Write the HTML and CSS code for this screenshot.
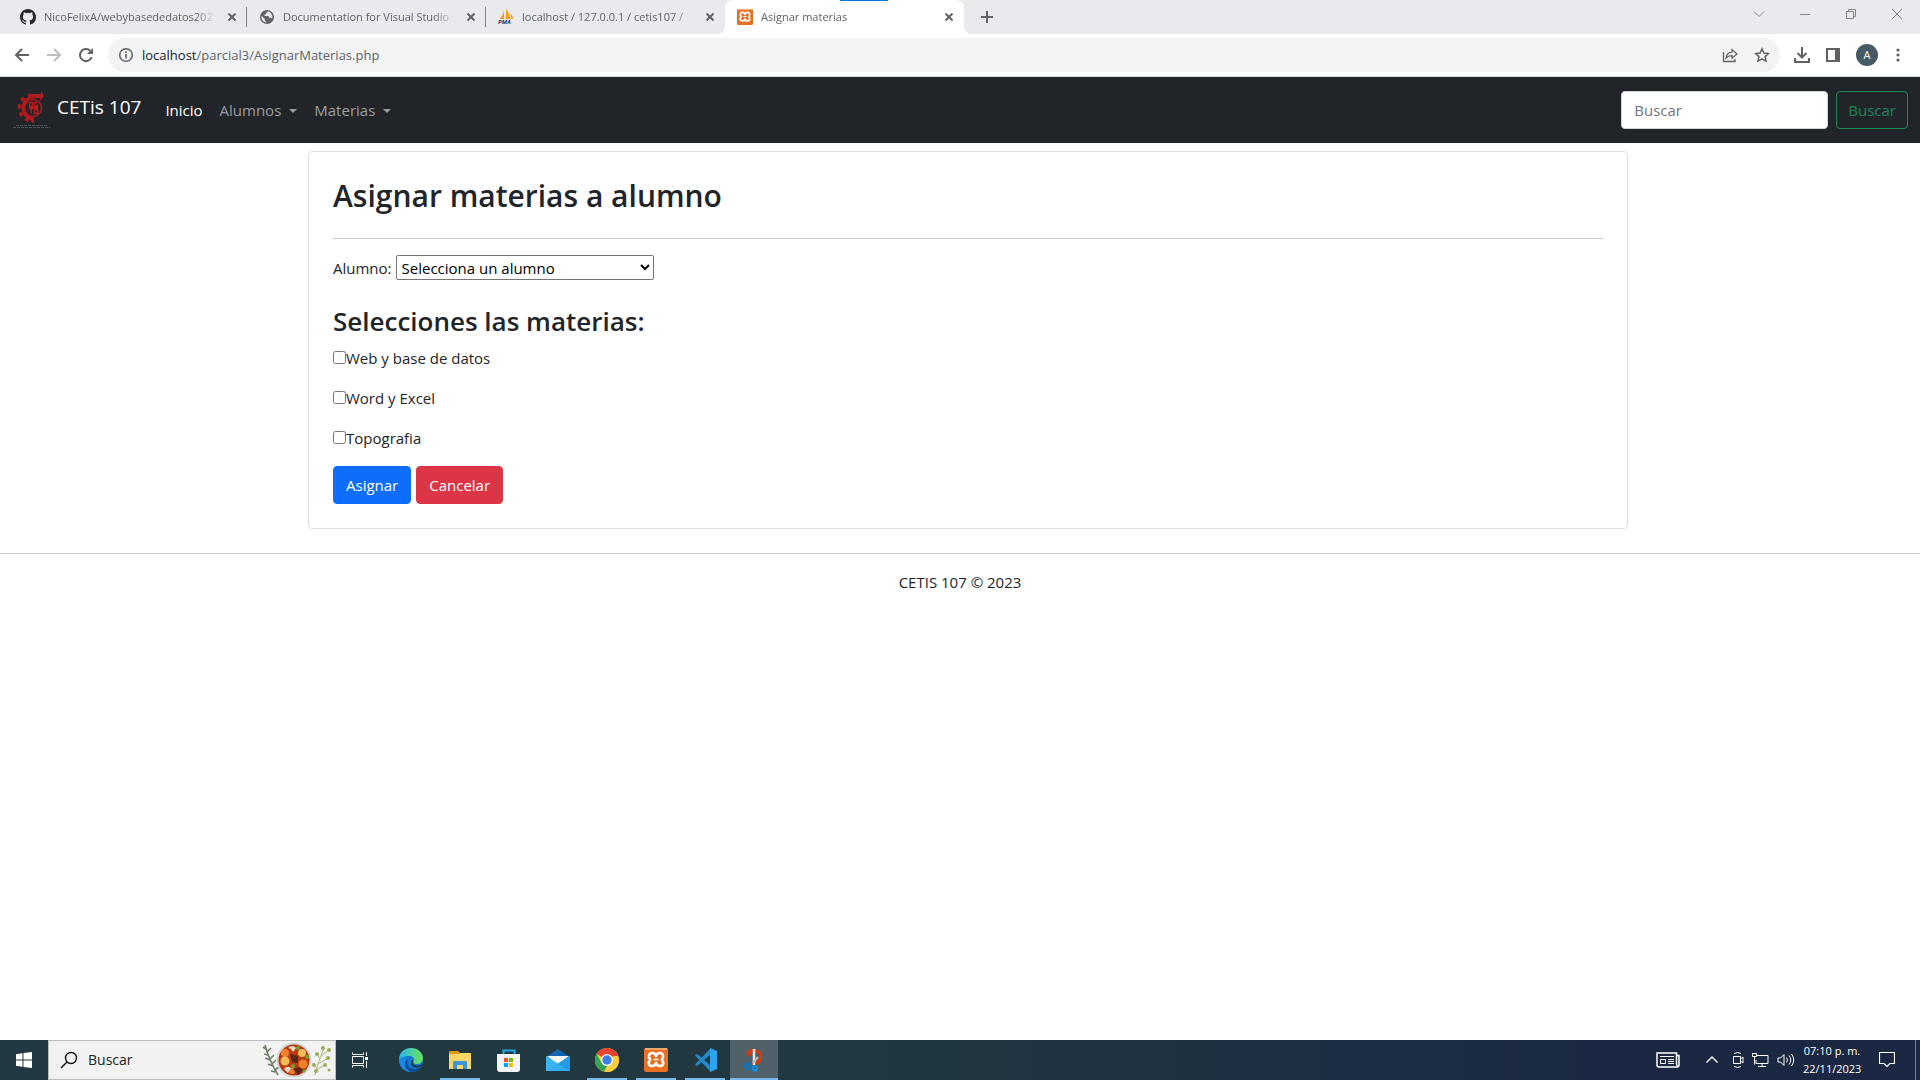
FILE: index.html
```html
<!DOCTYPE html>
<html lang="es">
<head>
<meta charset="utf-8">
<title>Asignar materias</title>
<link rel="stylesheet" href="styles.css">
</head>
<body>
<div class="tabs">
  <div class="tab">
    <svg width="16" height="16" viewBox="0 0 16 16"><path fill="#24292f" d="M8 0C3.58 0 0 3.58 0 8c0 3.54 2.29 6.53 5.47 7.59.4.07.55-.17.55-.38 0-.19-.01-.82-.01-1.49-2.01.37-2.53-.49-2.69-.94-.09-.23-.48-.94-.82-1.13-.28-.15-.68-.52-.01-.53.63-.01 1.08.58 1.23.82.72 1.21 1.87.87 2.33.66.07-.52.28-.87.51-1.07-1.78-.2-3.64-.89-3.64-3.95 0-.87.31-1.59.82-2.15-.08-.2-.36-1.02.08-2.12 0 0 .67-.21 2.2.82a7.6 7.6 0 0 1 4 0c1.53-1.04 2.2-.82 2.2-.82.44 1.1.16 1.92.08 2.12.51.56.82 1.27.82 2.15 0 3.07-1.87 3.75-3.65 3.95.29.25.54.73.54 1.48 0 1.07-.01 1.93-.01 2.2 0 .21.15.46.55.38A8 8 0 0 0 16 8c0-4.42-3.58-8-8-8z"/></svg>
    <span class="tab-title">NicoFelixA/webybasededatos202</span>
    <button class="tab-close" aria-label="Cerrar"><svg width="8" height="8"><path d="M.5.5l7 7M7.500.5l-7 7"/></svg></button>
  </div>
  <div class="tab">
    <svg width="16" height="16" viewBox="0 0 16 16"><circle cx="8" cy="8" r="7" fill="#5f6368"/><path fill="#e8eaed" d="M9 2.300c-.5 1.200-1 1.600-2 1.700v1.500H5.500V7H9c.8 0 1 .8 1 1.800h1.500c.9 0 1.200.5 1.400 1.200A5.600 5.600 0 0 0 9 2.300zM2.500 6.800l3.300 3.200v.9c0 .9.600 1.300 1.400 1.400v1.300a5.600 5.600 0 0 1-4.700-6.800z"/></svg>
    <span class="tab-title">Documentation for Visual Studio</span>
    <button class="tab-close" aria-label="Cerrar"><svg width="8" height="8"><path d="M.5.5l7 7M7.500.5l-7 7"/></svg></button>
  </div>
  <div class="tab">
    <svg width="16" height="16" viewBox="0 0 16 16"><path fill="#f89c0e" d="M6 1v9H1.500C4 7.500 5.500 5 6 1zM8 0c2 2.500 4 6 4.500 10H7.500C8.200 6.500 8.300 3 8 0zM12.200 4c1.600 1.700 2.600 3.700 3 6h-2c0-2-.3-4-1-6z"/><text x="0" y="15" font-size="6" font-weight="700" font-style="italic" fill="#33336b">PMA</text></svg>
    <span class="tab-title">localhost / 127.0.0.1 / cetis107 /</span>
    <button class="tab-close" aria-label="Cerrar"><svg width="8" height="8"><path d="M.5.5l7 7M7.500.5l-7 7"/></svg></button>
  </div>
  <div class="tab active">
    <svg width="16" height="16" viewBox="0 0 24 24"><use href="#xampp"/></svg>
    <span class="tab-title">Asignar materias</span>
    <button class="tab-close" aria-label="Cerrar"><svg width="8" height="8"><path d="M.5.5l7 7M7.500.5l-7 7"/></svg></button>
  </div>
  <button class="new-tab" aria-label="Nueva pestaña"><svg width="12" height="12"><path d="M6 0v12M0 6h12" stroke="#5f6368" stroke-width="2"/></svg></button>
  <div class="window-buttons">
    <button aria-label="Buscar pestañas"><svg width="12" height="12"><path d="M1 3.500l5 5 5-5"/></svg></button>
    <button aria-label="Minimizar"><svg width="12" height="12"><path d="M1 6.500h10"/></svg></button>
    <button aria-label="Restaurar"><svg width="12" height="12"><path d="M1.500 3.500h7v7h-7zM3.500 3.500v-2h7v7h-2"/></svg></button>
    <button aria-label="Cerrar"><svg width="12" height="12"><path d="M1 1l10 10M11 1L1 11"/></svg></button>
  </div>
</div>

<div class="toolbar">
  <button aria-label="Atrás"><svg width="16" height="16" viewBox="0 0 16 16"><path d="M15 8H2M8 2L2 8l6 6" stroke="#5f6368" stroke-width="2" fill="none"/></svg></button>
  <button aria-label="Adelante"><svg width="16" height="16" viewBox="0 0 16 16"><path d="M1 8h13M8 2l6 6-6 6" stroke="#babcbe" stroke-width="2" fill="none"/></svg></button>
  <button aria-label="Recargar"><svg width="16" height="16" viewBox="0 0 16 16"><path d="M13.700 10A6 6 0 1 1 12.200 3.800" stroke="#5f6368" stroke-width="2" fill="none"/><path d="M15 1v6H9z" fill="#5f6368"/></svg></button>
  <div class="address">
    <svg width="16" height="16" viewBox="0 0 16 16"><circle cx="8" cy="8" r="6.300" fill="none" stroke="#5f6368" stroke-width="1.500"/><path d="M8 7v4.500M8 4.300v1.700" stroke="#5f6368" stroke-width="1.600"/></svg>
    <span class="url"><b>localhost</b>/parcial3/AsignarMaterias.php</span>
    <svg width="16" height="16" viewBox="0 0 16 16"><path d="M1.500 5v9.500H13V12" fill="none" stroke="#5f6368" stroke-width="1.300"/><path d="M4 11c.6-4 3-5.500 6-5.800V2.500L15 7l-5 4.300V8.700C7.500 8.600 5.500 9.300 4 11z" fill="none" stroke="#5f6368" stroke-width="1.200"/></svg>
    <svg width="16" height="16" viewBox="0 0 16 16"><path d="M8 1.800l1.900 4.200 4.500.5-3.300 3.100.9 4.500L8 11.800l-4 2.300.9-4.500L1.600 6.500 6.100 6z" fill="none" stroke="#5f6368" stroke-width="1.500"/></svg>
  </div>
  <button aria-label="Descargas"><svg width="16" height="16" viewBox="0 0 16 16"><path d="M8 0v10M3.500 6L8 10.500 12.500 6M1 11v4h14v-4" fill="none" stroke="#5f6368" stroke-width="2"/></svg></button>
  <button aria-label="Panel lateral"><svg width="14" height="14"><path d="M1 1h12v12H1z" fill="none" stroke="#5f6368" stroke-width="2"/><path d="M9 1h4v12H9z" fill="#5f6368"/></svg></button>
  <button class="avatar" aria-label="Perfil">A</button>
  <button aria-label="Menú"><svg width="4" height="14" fill="#5f6368"><circle cx="2" cy="2" r="1.600"/><circle cx="2" cy="7" r="1.600"/><circle cx="2" cy="12" r="1.600"/></svg></button>
</div>

<nav class="navbar">
  <a class="brand" href="#">
    <svg width="40" height="38" viewBox="0 0 40 38">
      <circle cx="21" cy="17" r="8.500" fill="none" stroke="#a91b1d" stroke-width="1.600"/>
      <path d="M22 6A11 11 0 1 0 22 28" fill="none" stroke="#a91b1d" stroke-width="3"/>
      <path d="M20 4.500A12.500 12.500 0 0 0 20 29.500" fill="none" stroke="#a91b1d" stroke-width="4" stroke-dasharray="4 4"/>
      <path d="M20 3h9V0l3 4.500L28 10V7h-8z" fill="#b01c1e"/>
      <path d="M18 28h4v4h-2z" fill="#a91b1d"/>
      <path d="M17.500 11.500h3v4h-3zM25.500 11.500h-3v4h3v-2M17.500 18.500h3M19 18.500v4M22.500 18.500h3v4h-3zM17 17h9" fill="none" stroke="#b71d1f" stroke-width="1.500"/>
      <path d="M4 34.500h32M1 36.500h37" stroke="#515458" stroke-dasharray="3 1"/>
    </svg>
    <span>CETis 107</span>
  </a>
  <div class="links">
    <a class="current" href="#">Inicio</a>
    <a class="dropdown" href="#">Alumnos</a>
    <a class="dropdown" href="#">Materias</a>
  </div>
  <form class="search">
    <input type="search" placeholder="Buscar" aria-label="Buscar">
    <button class="btn outline" type="button">Buscar</button>
  </form>
</nav>

<main>
  <form class="card">
    <h2>Asignar materias a alumno</h2>
    <hr>
    <div class="field">
      <label for="alumno">Alumno:</label>
      <select id="alumno"><option>Selecciona un alumno</option></select>
    </div>
    <h3>Selecciones las materias:</h3>
    <div class="check"><input type="checkbox" id="m1"><label for="m1">Web y base de datos</label></div>
    <div class="check"><input type="checkbox" id="m2"><label for="m2">Word y Excel</label></div>
    <div class="check"><input type="checkbox" id="m3"><label for="m3">Topografia</label></div>
    <div class="actions">
      <button class="btn primary" type="button">Asignar</button>
      <button class="btn danger" type="button">Cancelar</button>
    </div>
  </form>
</main>
<hr>
<footer>CETIS 107 © 2023</footer>

<div class="taskbar">
  <button class="task" aria-label="Inicio"><svg width="16" height="16" viewBox="0 0 16 16" fill="#fff"><path d="M0 2.300L6.500 1.300V7.500H0zM7.500 1.100L16 0v7.500H7.500zM0 8.500h6.500v6.200L0 13.700zM7.500 8.500H16V16l-8.500-1.100z"/></svg></button>
  <label class="task-search">
    <svg width="18" height="18" viewBox="0 0 18 18"><circle cx="11" cy="7" r="5.500" fill="none" stroke="#111" stroke-width="1.400"/><path d="M7 11l-6 6" stroke="#111" stroke-width="1.400"/></svg>
    <input type="text" placeholder="Buscar" aria-label="Buscar en Windows">
    <svg width="70" height="36" viewBox="0 0 70 36">
      <path d="M3 3q4 15 13 30M4 7L1 5M5 10l4-4M6 13l-4-1M8 17l4-4M8 18l-5-2M10 22l4-4M11 24l-5-2M13 28l4-3M14 30l-5-1" fill="none" stroke="#70816b" stroke-width="1.600"/>
      <path d="M53 33Q56 20 62 6M54 28l9-5M56 22l10-6M58 17l-3-5M59 14l8-6M55 26l-3-3" fill="none" stroke="#b4ba72"/>
      <g fill="#9cac58"><circle cx="61" cy="6" r="2"/><circle cx="67" cy="8" r="2"/><circle cx="55" cy="12" r="2"/><circle cx="66" cy="16" r="2"/><circle cx="63" cy="23" r="2"/><circle cx="52" cy="23" r="2"/><circle cx="67" cy="28" r="1.500"/><circle cx="54" cy="29" r="2"/></g>
      <circle cx="32" cy="18" r="17.500" fill="#d5d5dc"/><circle cx="32" cy="18" r="15.500" fill="#b63b0f"/>
      <g fill="#f0812c"><circle cx="23" cy="11" r="4"/><circle cx="41" cy="22" r="4.500"/><circle cx="30" cy="29" r="3"/></g>
      <g fill="#f3bd57"><circle cx="40" cy="11" r="4"/><circle cx="23" cy="19" r="4.500"/></g>
      <g fill="#5b2417"><path d="M28 12l8 2v7l-6-1zM31 27l6-2 4 3-5 5z"/></g>
      <g fill="#eadccd"><path d="M26 6q5-4 8 0l-3 4-2-3zM22 27q3-4 7-1l-3 5z"/></g>
      <g fill="#69a82b"><circle cx="36" cy="6" r="2"/><circle cx="31" cy="24" r="2"/><circle cx="45" cy="15" r="2"/><circle cx="42" cy="29" r="1.500"/></g>
    </svg>
  </label>
  <button class="task" aria-label="Vista de tareas"><svg width="18" height="16" viewBox="0 0 18 16"><path d="M1.500 4.500h11v7h-11zM1.500 2V.5M1.500 2.500h11M12.500 2V.5M1.500 15.500v-2h11v2M15.500 0v4M15.500 9v7" fill="none" stroke="#fff"/><path d="M14 5h3v3h-3z" fill="#fff"/></svg></button>
  <div class="apps">
    <button class="task" aria-label="Edge"><svg width="24" height="24" viewBox="0 0 24 24"><defs><linearGradient id="eg"><stop stop-color="#2bb4ec"/><stop offset="1" stop-color="#6be35a"/></linearGradient></defs><circle cx="12" cy="12" r="12" fill="#1277cf"/><path d="M0 12C0 4 6 0 12 0c7 0 12 5 12 10 0 4-3 6-6 6-4 0-4-2-3-4 0-3-2-4-5-4-5 0-9 2-10 4z" fill="url(#eg)"/><path d="M9 9c-4 3-4 11 3 15-7 0-12-6-12-12 2-3 6-4 9-3z" fill="#1988dc"/><path d="M9 11c-2 5 1 10 6 10 3 0 6-1 7-3-2 4-6 6-10 6-7-3-8-10-3-13z" fill="#0c4e97"/><path d="M14 15c1 3 5 4 9 1l-1 2c-4 3-10 2-10-3 0-2 1-3 2-3 1 1-1 2 0 3z" fill="#213840"/></svg></button>
    <button class="task open" aria-label="Explorador"><svg width="24" height="24" viewBox="0 0 24 24"><path d="M1 3h9l2 2h10v4H1z" fill="#dc9a15"/><path d="M1 6h10l2-1h10v16H1z" fill="#fbd768"/><path d="M5 21v-7q0-1 1-1h12q1 0 1 1v7h-4v-4H9v4z" fill="#3b94d9"/></svg></button>
    <button class="task" aria-label="Store"><svg width="24" height="24" viewBox="0 0 24 24"><path d="M6.500 8V2.500h11V8" fill="none" stroke="#22a7ec" stroke-width="2"/><path d="M0 6h23v15q0 3-3 3H3q-3 0-3-3z" fill="#f3f4f5"/><path d="M7 10h4v4H7z" fill="#f04e24"/><path d="M12 10h4v4h-4z" fill="#7fba00"/><path d="M7 15h4v4H7z" fill="#00a1ee"/><path d="M12 15h4v4h-4z" fill="#ffb900"/></svg></button>
    <button class="task" aria-label="Correo"><svg width="24" height="24" viewBox="0 0 24 24"><path d="M0 9l12-8 12 8v4H0z" fill="#1264b0"/><path d="M1 8h22L12 17z" fill="#f2f4f6"/><path d="M0 8l24 15H0z" fill="#39b5ee"/><path d="M24 8v15L12 15.500z" fill="#1485d8"/><path d="M0 23l24-15v15z" fill="#2fa9ed" opacity=".6"/></svg></button>
    <button class="task open" aria-label="Chrome"><svg width="24" height="24" viewBox="0 0 24 24"><circle cx="12" cy="12" r="12" fill="#ffcd40"/><path d="M12 12L1.600 6A12 12 0 0 1 22.400 6z" fill="#e94235"/><path d="M1.600 6l5.200 9 5.200 3-3 5.600A12 12 0 0 1 1.600 6z" fill="#34a353"/><path d="M12 24l5.200-9V12H24A12 12 0 0 1 12 24z" fill="#ffcd40"/><path d="M12 6h10.400l.8 2H12z" fill="#e94235"/><circle cx="12" cy="12" r="6" fill="#fff"/><circle cx="12" cy="12" r="4.700" fill="#3b7ded"/></svg></button>
    <button class="task open" aria-label="XAMPP"><svg width="24" height="24" viewBox="0 0 24 24"><g id="xampp"><rect width="24" height="24" rx="2" fill="#e96f22"/><path d="M1 0h22v2H1z" fill="#f5a66e"/><path d="M12 8C11.500 5.500 10 5 8.200 5C5 5 3.800 8.500 6.200 11.500C3.800 14.500 4.500 18 8 18C10.500 18 11.500 17 12 15C12.500 17 13.500 18 16 18C19.500 18 20.200 14.500 17.800 11.500C20.200 8.500 19 5 15.800 5C14 5 12.500 5.500 12 8z" fill="none" stroke="#fff" stroke-width="2.600" stroke-linejoin="round"/><path d="M9.500 11.500h5" stroke="#fff" stroke-width="1.500"/></g></svg></button>
    <button class="task open" aria-label="Visual Studio Code"><svg width="24" height="24" viewBox="0 0 24 24"><path d="M2 16.500L17 1v6L4 18z" fill="#2489ca"/><path d="M2 7.500L17 23v-6L4 6z" fill="#1070b3"/><path d="M2 7.500L4 6l13 11v6z" fill="#2489ca"/><path d="M17 0l7 3v18l-7 3z" fill="#2ba5ee"/></svg></button>
    <button class="task selected" aria-label="Recortes"><svg width="24" height="24" viewBox="0 0 24 24"><path d="M11 1C4 1 3 7 6 8c2 1 3-1 4-3 3-2 7 0 7 4 0 3-3 5-6 5l-1 2c6 2 11-2 10-8-1-5-4-7-9-7z" fill="#d03c12"/><path d="M12 1v16" stroke="#e8ebec" stroke-width="2.500"/><path d="M16 9l-5 6" stroke="#b3bdc2" stroke-width="2"/><circle cx="6" cy="18" r="2.700" fill="none" stroke="#0878c8" stroke-width="2.200"/><circle cx="13" cy="20.500" r="2.200" fill="none" stroke="#1690dc" stroke-width="2.200"/></svg></button>
  </div>
  <div class="tray">
    <svg width="24" height="16" viewBox="0 0 24 16"><path d="M20.500 3.500H23V13q0 2-2 2H3q-2 0-2-2V1h19.500v11q0 1.500 1.200 1.500" fill="none" stroke="#fff" stroke-width="1.500"/><path d="M4.500 7.500h5v4h-5zM4 4.500h14M12 7.500h6M12 9.500h6M12 11.500h6" fill="none" stroke="#fff"/></svg>
    <svg class="chevron" width="12" height="12" viewBox="0 0 12 12"><path d="M.5 8.500L6 3l5.500 5.500" fill="none" stroke="#fff" stroke-width="1.400"/></svg>
    <svg width="12" height="16" viewBox="0 0 12 16"><path d="M1.500 4.500h7v7h-7zM8.500 7l2.500-2v6L8.500 9M2 1.500q4-2 7 0M2 14.500q4 2 7 0" fill="none" stroke="#fff"/></svg>
    <svg width="17" height="14" viewBox="0 0 17 14"><path d="M5 2.500h11v8H4V7M.5.5h4v3h-4zM2.500 3.500v8M10 10.500v3M6 13.500h8" fill="none" stroke="#fff"/></svg>
    <svg width="18" height="14" viewBox="0 0 18 14"><path d="M1 5h2.500L7 1.500v11L3.500 9H1zM9.500 4.500q2 2.500 0 5M12 2.500q3.500 4.500 0 9M14.500 1q4.500 6 0 12" fill="none" stroke="#fff"/></svg>
    <div class="clock">07:10 p. m.<br>22/11/2023</div>
    <svg class="notice" width="16" height="16" viewBox="0 0 16 16"><path d="M.5.500h15v11H11l-3 3-3-3H.5z" fill="none" stroke="#fff" stroke-width="1.200"/></svg>
  </div>
</div>
</body>
</html>
```
FILE: styles.css
```css
* { box-sizing: border-box; }
body {
  margin: 0;
  min-height: 100vh;
  display: flex;
  flex-direction: column;
  background: #fff;
  color: #212529;
  font: 15px/24px "Open Sans", "Noto Sans", sans-serif;
}
svg { display: block; flex: none; }
button, input, select { font: inherit; }
button { padding: 0; border: 0; background: none; }
a { color: inherit; text-decoration: none; }
hr { width: 100%; height: 1px; margin: 0; border: 0; background: #c8c9ca; }

/* Browser tabs */
.tabs {
  display: flex;
  height: 34px;
  padding-left: 8px;
  background: #e8eaed;
  color: #5f6368;
  font-size: 11px;
}
.tab {
  position: relative;
  display: flex;
  align-items: center;
  gap: 8px;
  width: 239px;
  padding: 0 7px 0 12px;
  background: linear-gradient(#80868b, #80868b) right center / 1px 20px no-repeat;
}
.tab:nth-child(3) { background: none; }
.tab.active {
  border-radius: 8px 8px 0 0;
  background: linear-gradient(#0078d7, #0078d7) 115px 0 / 48px 1px no-repeat #fff;
}
.tab.active::before,
.tab.active::after {
  content: "";
  position: absolute;
  bottom: 0;
  left: -8px;
  width: 8px;
  height: 8px;
  background: radial-gradient(circle at 0 0, transparent 8px, #fff 8px);
}
.tab.active::after {
  left: 100%;
  background: radial-gradient(circle at 100% 0, transparent 8px, #fff 8px);
}
.tab-title {
  flex: 1;
  overflow: hidden;
  white-space: nowrap;
  -webkit-mask-image: linear-gradient(90deg, #000 88%, transparent);
}
.tab-close { padding: 4px; }
.tab-close path { stroke: #5f6368; stroke-width: 2; }
.new-tab { width: 46px; display: grid; place-items: center; }
.window-buttons { display: flex; margin-left: auto; }
.window-buttons button { width: 46px; height: 28px; display: grid; place-items: center; }
.window-buttons path { fill: none; stroke: #85878a; }

/* Browser toolbar */
.toolbar {
  display: flex;
  align-items: center;
  gap: 16px;
  height: 43px;
  padding: 0 20px 0 14px;
  border-bottom: 1px solid #dadce0;
}
.address {
  flex: 1;
  display: flex;
  align-items: center;
  gap: 16px;
  height: 34px;
  margin: 0 -2px;
  padding: 0 10px;
  border-radius: 17px;
  background: #f1f3f4;
  color: #5f6368;
  font-size: 13px;
}
.url { flex: 1; margin-left: -8px; }
.url b { color: #202124; font-weight: 400; }
.avatar {
  width: 22px;
  height: 22px;
  margin-right: 2px;
  border-radius: 50%;
  background: #455a64;
  color: #fff;
  font-size: 11px;
  line-height: 22px;
}

/* Site navigation */
.navbar {
  display: flex;
  align-items: center;
  height: 66px;
  padding: 0 12px;
  background: #212529;
  color: #9b9d9f;
}
.brand { display: flex; gap: 5px; margin-right: 16px; color: #fff; font-size: 19px; }
.brand span { padding-top: 4px; }
.links { display: flex; gap: 1px; }
.links a { padding: 8px; }
.links .current { color: #fff; }
.dropdown::after {
  content: "";
  display: inline-block;
  margin-left: 8px;
  vertical-align: 3px;
  border-top: 4px solid;
  border-left: 4px solid transparent;
  border-right: 4px solid transparent;
}
.search { display: flex; gap: 8px; margin-left: auto; }
.search input {
  width: 207px;
  height: 38px;
  padding: 6px 12px;
  border: 1px solid #ced4da;
  border-radius: 4px;
  background: #fff;
}
.search input::placeholder { color: #6c757d; }
.btn { height: 38px; padding: 0 12px; border: 1px solid; border-radius: 4px; }
.outline { padding: 0 11px; color: #198754; }
.primary { border-color: #0d6efd; background: #0d6efd; color: #fff; }
.danger { border-color: #dc3545; background: #dc3545; color: #fff; }

/* Assignment form */
main { padding: 8px 0 24px 16px; }
.card {
  max-width: 1320px;
  margin: 0 auto;
  padding: 24px;
  border: 1px solid #dfdfdf;
  border-radius: 4px;
}
h2, h3 { margin: 0; font-weight: 600; }
h2 { padding-top: 2px; font-size: 30px; line-height: 36px; margin-bottom: 24px; }
h3 { font-size: 26px; line-height: 34px; margin-bottom: 8px; }
.field { display: flex; align-items: center; gap: 4px; margin: 16px 0 24px; }
.field select {
  width: 258px;
  height: 25px;
  padding: 0 0 0 1px;
  border: 1px solid #767676;
  border-radius: 2px;
  background: #fff;
  color: #000;
}
.check { display: flex; align-items: center; height: 24px; margin-bottom: 16px; }
.check input { width: 13px; height: 13px; margin: 0 0 2px; }
.actions { display: flex; gap: 5px; }
footer { padding: 16px; text-align: center; }

/* Windows taskbar */
.taskbar {
  display: flex;
  height: 40px;
  margin-top: auto;
  background: linear-gradient(90deg, #213840, #213840 45%, #1a2843 85%);
  color: #fff;
}
.task { width: 48px; display: grid; place-items: center; }
.apps { display: flex; gap: 1px; margin-left: 3px; }
.open { background: linear-gradient(#76b9ed, #76b9ed) center bottom / 40px 2px no-repeat; }
.selected { background: #506169; border-bottom: 2px solid #76b9ed; padding-top: 2px; }
.task-search {
  display: flex;
  align-items: center;
  gap: 10px;
  width: 288px;
  padding: 0 3px 0 11px;
  border: 1px solid #b9bbbc;
  background: #f2f2f2;
}
.task-search input {
  flex: 1;
  min-width: 0;
  padding: 0;
  border: 0;
  background: none;
  font-size: 14px;
}
.task-search input::placeholder { color: #222; }
.tray {
  display: flex;
  align-items: center;
  gap: 8px;
  margin: 0 4px 0 auto;
  padding-right: 20px;
  border-right: 1px solid #7b8592;
}
.chevron { margin: 0 6px 0 18px; }
.clock { width: 58px; font-size: 11px; line-height: 18px; text-align: center; white-space: nowrap; }
.notice { margin-left: 10px; }
```
